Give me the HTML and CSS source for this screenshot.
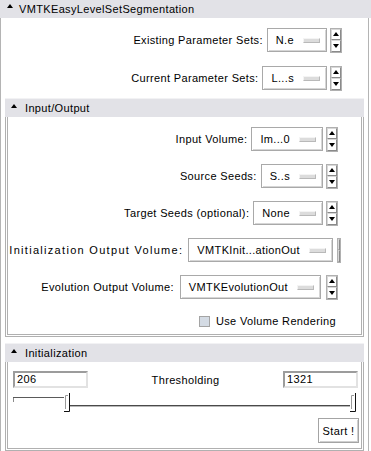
FILE: index.html
```html
<!DOCTYPE html>
<html lang="en">
<head>
  <meta charset="UTF-8">
  <title>VMTKEasyLevelSetSegmentation</title>
  <link rel="stylesheet" href="styles.css">
</head>
<body>
  <div class="app">
    <div class="bar"><span class="tri"></span>VMTKEasyLevelSetSegmentation</div>
    <div class="frame">
      <div class="rows top">
        <div class="row">
          <span class="lbl">Existing Parameter Sets:</span>
          <span class="mb"><span class="mbtext">N.e</span><span class="ind"></span></span>
          <span class="spin"><span class="up"></span><span class="dn"></span></span>
        </div>
        <div class="row">
          <span class="lbl">Current Parameter Sets:</span>
          <span class="mb"><span class="mbtext">L...s</span><span class="ind"></span></span>
          <span class="spin"><span class="up"></span><span class="dn"></span></span>
        </div>
      </div>

      <div class="section">
        <div class="bar sub"><span class="tri"></span>Input/Output</div>
        <div class="box io">
          <div class="row">
            <span class="lbl">Input Volume:</span>
            <span class="mb"><span class="mbtext">Im...0</span><span class="ind"></span></span>
            <span class="spin"><span class="up"></span><span class="dn"></span></span>
          </div>
          <div class="row">
            <span class="lbl">Source Seeds:</span>
            <span class="mb"><span class="mbtext">S..s</span><span class="ind"></span></span>
            <span class="spin"><span class="up"></span><span class="dn"></span></span>
          </div>
          <div class="row">
            <span class="lbl">Target Seeds (optional):</span>
            <span class="mb"><span class="mbtext">None</span><span class="ind"></span></span>
            <span class="spin"><span class="up"></span><span class="dn"></span></span>
          </div>
          <div class="row wide clipped">
            <span class="lbl loose">Initialization Output Volume:</span>
            <span class="mb"><span class="mbtext">VMTKInit...ationOut</span><span class="ind"></span></span>
            <span class="spin squeezed"><span class="up"></span><span class="dn"></span></span>
          </div>
          <div class="row wide">
            <span class="lbl">Evolution Output Volume:</span>
            <span class="mb"><span class="mbtext">VMTKEvolutionOut</span><span class="ind"></span></span>
            <span class="spin"><span class="up"></span><span class="dn"></span></span>
          </div>
          <div class="check"><span class="cb"></span>Use Volume Rendering</div>
        </div>
      </div>

      <div class="section">
        <div class="bar sub"><span class="tri"></span>Initialization</div>
        <div class="box init">
          <div class="thr">
            <span class="entry">206</span>
            <span class="thrlbl">Thresholding</span>
            <span class="entry">1321</span>
          </div>
          <svg class="slider" width="346" height="22" viewBox="0 0 346 22">
            <line x1="1.5" y1="6" x2="1.5" y2="11" stroke="#8a8a8a"/>
            <line x1="1" y1="6.5" x2="52" y2="6.5" stroke="#5a5a5a"/>
            <line x1="57" y1="14.5" x2="338" y2="14.5" stroke="#4a4a4a"/>
            <line x1="57" y1="15.5" x2="338" y2="15.5" stroke="#b8b8b8"/>
            <path d="M56 4.5 H53.5 V18" fill="none" stroke="#9a9a9a"/>
            <path d="M52 20.5 H57.5 V2" fill="none" stroke="#111"/>
            <path d="M342 4.5 H339.5 V18" fill="none" stroke="#9a9a9a"/>
            <path d="M338 20.5 H343.5 V2" fill="none" stroke="#111"/>
          </svg>
          <div class="actions"><span class="btn">Start !</span></div>
        </div>
      </div>
    </div>
  </div>
</body>
</html>
```

FILE: styles.css
```css
body {
  margin: 0;
  background: #fff;
  font-family: "Liberation Sans", Arial, sans-serif;
  font-size: 11px;
  letter-spacing: 0.35px;
  color: #000;
}
.app {
  width: 371px;
}
.bar {
  display: flex;
  align-items: center;
  height: 18px;
  background: #e2e2e7;
  padding-left: 19px;
  position: relative;
}
.bar.sub {
  padding-left: 20px;
  border-top: 1px solid #f2f2f4;
}
.tri {
  position: absolute;
  left: 7px;
  top: 4px;
  width: 0;
  height: 0;
  border-left: 3px solid transparent;
  border-right: 3px solid transparent;
  border-bottom: 4px solid #000;
}
.bar.sub .tri {
  left: 6px;
  top: 5px;
}
.frame {
  margin: 0 2px 0 0;
  border: 1px solid #b4b4b4;
  border-top: none;
  padding: 0 4px 4px 4px;
}
.rows.top {
  display: flex;
  flex-direction: column;
  gap: 14px;
  padding: 10px 22px 8px 0;
}
.row {
  display: flex;
  justify-content: flex-end;
  align-items: center;
  height: 24px;
  gap: 4px;
}
.row.wide {
  gap: 6px;
}
.row.clipped {
  gap: 5px;
  margin-right: -3px;
}
.lbl {
  white-space: nowrap;
}
.lbl.loose {
  letter-spacing: 1.3px;
}
.mb {
  display: flex;
  align-items: center;
  box-sizing: border-box;
  height: 24px;
  border: 1px solid #a9a9a9;
  box-shadow: inset 1px 1px #fff, inset -1px -1px #d6d6d6;
  padding: 0 6px 0 8px;
  gap: 9px;
  white-space: nowrap;
  margin-right: -1px;
}
.ind {
  width: 15px;
  height: 3px;
  background: #dcdcdc;
  border: 1px solid #b9b9b9;
  border-top-color: #f4f4f4;
  border-left-color: #f4f4f4;
}
.spin {
  display: flex;
  flex-direction: column;
  width: 12px;
  height: 25px;
  box-sizing: border-box;
  border: 1px solid #b0b0b0;
}
.spin span {
  flex: 1;
  display: flex;
  align-items: center;
  justify-content: center;
  border: 1px solid #d8d8d8;
  border-right-color: #8a8a8a;
  border-bottom-color: #8a8a8a;
}
.spin .up::after {
  content: "";
  border-left: 3px solid transparent;
  border-right: 3px solid transparent;
  border-bottom: 4px solid #000;
}
.spin .dn::after {
  content: "";
  border-left: 3px solid transparent;
  border-right: 3px solid transparent;
  border-top: 4px solid #000;
}
.spin.squeezed {
  width: 4px;
}
.spin.squeezed span::after {
  display: none;
}
.section + .section {
  margin-top: 6px;
}
.box {
  border: 3px double #b0b0b0;
  border-top: none;
}
.box.io {
  display: flex;
  flex-direction: column;
  gap: 13px;
  padding: 10px 23px 7px 0;
}
.check {
  display: flex;
  align-items: center;
  justify-content: flex-end;
  gap: 6px;
  margin-top: 3px;
  margin-right: 2px;
}
.cb {
  width: 9px;
  height: 9px;
  background: #d4dbe4;
  border: 1px solid #a4a4a4;
}
.box.init {
  padding: 9px 3px 5px 5px;
}
.thr {
  display: flex;
  align-items: center;
  justify-content: space-between;
}
.entry {
  box-sizing: border-box;
  width: 75px;
  height: 17px;
  line-height: 13px;
  padding-left: 2px;
  border: 2px solid #e2e2e2;
  border-top-color: #9c9c9c;
  border-left-color: #9c9c9c;
}
.thrlbl {
  flex: 1;
  text-align: center;
}
.slider {
  display: block;
  margin: 3px 0 0 -1px;
}
.actions {
  display: flex;
  justify-content: flex-end;
  margin-top: 5px;
}
.btn {
  display: flex;
  align-items: center;
  justify-content: center;
  box-sizing: border-box;
  width: 41px;
  height: 25px;
  border: 1px solid #a4a4a4;
  box-shadow: inset 1px 1px #fff, inset -1px -1px #d0d0d0;
  margin-right: -1px;
}
```
